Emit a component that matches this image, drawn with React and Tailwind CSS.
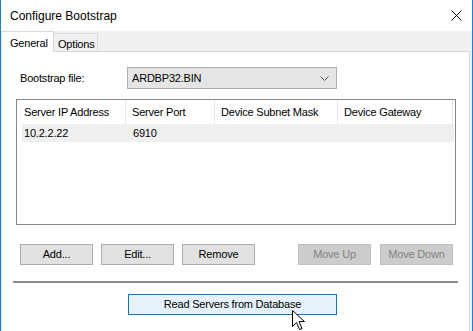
import React from "react";

const font = { fontFamily: '"Liberation Sans", Arial, sans-serif' };

function Btn({ children, w = "w-[73px]", disabled }) {
  return (
    <div
      className={`${w} h-[21px] flex items-center justify-center border ${
        disabled
          ? "bg-[#cccccc] border-[#bfbfbf] text-[#838383]"
          : "bg-[#e1e1e1] border-[#adadad] text-black"
      }`}
    >
      {children}
    </div>
  );
}

export default function App() {
  return (
    <div
      className="w-[473px] h-[331px] overflow-hidden bg-white border-l border-r border-[#1883d7] flex flex-col relative text-[11px] tracking-[-0.2px] text-black"
      style={font}
    >
      {/* title bar */}
      <div className="h-[31px] shrink-0 flex items-center justify-between pl-[9px] pr-[9px]">
        <span className="text-[12px] tracking-normal">Configure Bootstrap</span>
        <svg width="11" height="11" viewBox="0 0 11 11" className="mr-[1px]">
          <path d="M0.5 0.5 L10.5 10.5 M10.5 0.5 L0.5 10.5" stroke="#000" strokeWidth="1" />
        </svg>
      </div>
      {/* body */}
      <div className="flex-1 bg-[#f0f0f0] flex flex-col pr-[2px]">
        {/* tabs */}
        <div className="h-[20px] flex items-end relative z-10">
          <div className="h-[21px] w-[53px] bg-white border-l border-t border-r border-[#d9d9d9] -mb-[1px] pl-[8px] pt-[3px]">
            General
          </div>
          <div className="h-[18px] w-[44px] bg-[#f0f0f0] border-t border-r border-[#d9d9d9] pl-[4px] pt-[2px]">
            Options
          </div>
        </div>
        {/* panel */}
        <div className="flex-1 bg-white border border-b-0 border-[#d9d9d9] flex flex-col">
          <div className="flex items-center mt-[15px] h-[22px]">
            <span className="ml-[18px] w-[107px]">Bootstrap file:</span>
            <div className="w-[210px] h-[22px] bg-[#e5e5e5] border border-[#adadad] flex items-center justify-between pl-[4px] pr-[7px]">
              <span>ARDBP32.BIN</span>
              <svg width="9" height="5" viewBox="0 0 9 5">
                <path d="M0.5 0.5 L4.5 4.5 L8.5 0.5" stroke="#555" fill="none" strokeWidth="1" />
              </svg>
            </div>
          </div>
          {/* list */}
          <div className="ml-[14px] mt-[10px] w-[440px] h-[126px] border border-[#828790] bg-white flex flex-col">
            <div className="h-[24px] flex">
              <div className="w-[109px] border-r border-[#e5e5e5] pl-[7px] flex items-center">Server IP Address</div>
              <div className="w-[89px] border-r border-[#e5e5e5] pl-[6px] flex items-center">Server Port</div>
              <div className="w-[123px] border-r border-[#e5e5e5] pl-[6px] flex items-center">Device Subnet Mask</div>
              <div className="w-[115px] border-r border-[#e5e5e5] pl-[6px] flex items-center">Device Gateway</div>
            </div>
            <div className="h-[18px] ml-[5px] w-[432px] bg-[#efefef] flex items-center">
              <span className="w-[111px] pl-[2px]">10.2.2.22</span>
              <span>6910</span>
            </div>
          </div>
          {/* buttons */}
          <div className="flex mt-[19px] ml-[18px]">
            <div className="flex gap-[8px]">
              <Btn>Add...</Btn>
              <Btn>Edit...</Btn>
              <Btn>Remove</Btn>
            </div>
            <div className="flex gap-[9px] ml-[43px]">
              <Btn disabled>Move Up</Btn>
              <Btn disabled>Move Down</Btn>
            </div>
          </div>
          {/* separator */}
          <div className="ml-[11px] mt-[16px] w-[445px] h-[2px] bg-[#8c8c8c]"></div>
          {/* read button */}
          <div className="ml-[126px] mt-[11px] w-[209px] h-[21px] border border-[#0078d7] bg-[#e5f1fb] flex items-center justify-center">
            Read Servers from Database
          </div>
        </div>
      </div>
      {/* cursor */}
      <svg
        className="absolute left-[291px] top-[310px]"
        width="14"
        height="22"
        viewBox="0 0 14 22"
      >
        <path
          d="M0.5 0.5 L0.5 16.5 L4.5 12.5 L7.5 19.5 L10 18.5 L7 11.5 L12.5 11.5 Z"
          fill="#fff"
          stroke="#000"
          strokeWidth="1"
          strokeLinejoin="miter"
        />
      </svg>
    </div>
  );
}
